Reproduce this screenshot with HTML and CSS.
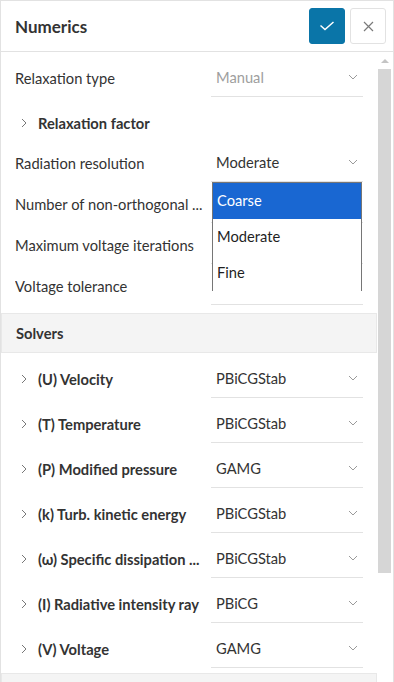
FILE: index.html
```html
<!DOCTYPE html>
<html lang="en">
<head>
    <meta charset="UTF-8">
    <meta name="viewport" content="width=device-width, initial-scale=1.0">
    <title>Numerics</title>
    <link rel="stylesheet" href="styles.css">
</head>
<body>

<div class="panel">
    <div class="panel-head">
        <h1>Numerics</h1>
        <div class="actions">
            <button class="btn-ok" title="Save">
                <svg width="16" height="10" viewBox="0 0 16 10"><path d="M1.5 4.5l4.5 4 8.5-7.5" fill="none" stroke="#fff" stroke-width="1.5"/></svg>
            </button>
            <button class="btn-close" title="Close">
                <svg width="11" height="11" viewBox="0 0 11 11"><path d="M1 1l9 9M10 1l-9 9" fill="none" stroke="#7a7a7a" stroke-width="1.2"/></svg>
            </button>
        </div>
    </div>

    <div class="panel-body">
        <div class="content">
            <div class="fields">
                <div class="row">
                    <span class="label">Relaxation type</span>
                    <div class="select disabled">
                        <span class="value">Manual</span>
                        <svg class="caret" width="10" height="6" viewBox="0 0 10 6"><path d="M1 1l4 4 4-4" fill="none" stroke="#9a9a9a"/></svg>
                    </div>
                </div>
                <div class="toggle toggle-block">
                    <svg class="chev" width="6" height="10" viewBox="0 0 6 10"><path d="M1 1l4 4-4 4" fill="none" stroke="#777"/></svg>
                    <span>Relaxation factor</span>
                </div>
                <div class="row">
                    <span class="label">Radiation resolution</span>
                    <div class="select open">
                        <span class="value">Moderate</span>
                        <svg class="caret" width="10" height="6" viewBox="0 0 10 6"><path d="M1 1l4 4 4-4" fill="none" stroke="#9a9a9a"/></svg>
                        <ul class="popup">
                            <li class="active">Coarse</li>
                            <li>Moderate</li>
                            <li>Fine</li>
                        </ul>
                    </div>
                </div>
                <div class="row">
                    <span class="label">Number of non-orthogonal ...</span>
                    <div class="select"></div>
                </div>
                <div class="row">
                    <span class="label">Maximum voltage iterations</span>
                    <div class="select"></div>
                </div>
                <div class="row">
                    <span class="label">Voltage tolerance</span>
                    <div class="select"></div>
                </div>
            </div>

            <div class="section-head">Solvers</div>

            <div class="fields solvers">
                <div class="row">
                    <span class="toggle"><svg class="chev" width="6" height="10" viewBox="0 0 6 10"><path d="M1 1l4 4-4 4" fill="none" stroke="#777"/></svg><span>(U) Velocity</span></span>
                    <div class="select"><span class="value">PBiCGStab</span><svg class="caret" width="10" height="6" viewBox="0 0 10 6"><path d="M1 1l4 4 4-4" fill="none" stroke="#9a9a9a"/></svg></div>
                </div>
                <div class="row">
                    <span class="toggle"><svg class="chev" width="6" height="10" viewBox="0 0 6 10"><path d="M1 1l4 4-4 4" fill="none" stroke="#777"/></svg><span>(T) Temperature</span></span>
                    <div class="select"><span class="value">PBiCGStab</span><svg class="caret" width="10" height="6" viewBox="0 0 10 6"><path d="M1 1l4 4 4-4" fill="none" stroke="#9a9a9a"/></svg></div>
                </div>
                <div class="row">
                    <span class="toggle"><svg class="chev" width="6" height="10" viewBox="0 0 6 10"><path d="M1 1l4 4-4 4" fill="none" stroke="#777"/></svg><span>(P) Modified pressure</span></span>
                    <div class="select"><span class="value">GAMG</span><svg class="caret" width="10" height="6" viewBox="0 0 10 6"><path d="M1 1l4 4 4-4" fill="none" stroke="#9a9a9a"/></svg></div>
                </div>
                <div class="row">
                    <span class="toggle"><svg class="chev" width="6" height="10" viewBox="0 0 6 10"><path d="M1 1l4 4-4 4" fill="none" stroke="#777"/></svg><span>(k) Turb. kinetic energy</span></span>
                    <div class="select"><span class="value">PBiCGStab</span><svg class="caret" width="10" height="6" viewBox="0 0 10 6"><path d="M1 1l4 4 4-4" fill="none" stroke="#9a9a9a"/></svg></div>
                </div>
                <div class="row">
                    <span class="toggle"><svg class="chev" width="6" height="10" viewBox="0 0 6 10"><path d="M1 1l4 4-4 4" fill="none" stroke="#777"/></svg><span>(ω) Specific dissipation ...</span></span>
                    <div class="select"><span class="value">PBiCGStab</span><svg class="caret" width="10" height="6" viewBox="0 0 10 6"><path d="M1 1l4 4 4-4" fill="none" stroke="#9a9a9a"/></svg></div>
                </div>
                <div class="row">
                    <span class="toggle"><svg class="chev" width="6" height="10" viewBox="0 0 6 10"><path d="M1 1l4 4-4 4" fill="none" stroke="#777"/></svg><span>(I) Radiative intensity ray</span></span>
                    <div class="select"><span class="value">PBiCG</span><svg class="caret" width="10" height="6" viewBox="0 0 10 6"><path d="M1 1l4 4 4-4" fill="none" stroke="#9a9a9a"/></svg></div>
                </div>
                <div class="row">
                    <span class="toggle"><svg class="chev" width="6" height="10" viewBox="0 0 6 10"><path d="M1 1l4 4-4 4" fill="none" stroke="#777"/></svg><span>(V) Voltage</span></span>
                    <div class="select"><span class="value">GAMG</span><svg class="caret" width="10" height="6" viewBox="0 0 10 6"><path d="M1 1l4 4 4-4" fill="none" stroke="#9a9a9a"/></svg></div>
                </div>
            </div>

            <div class="section-head"></div>
        </div>

        <div class="scrollbar">
            <span class="arrow"></span>
            <span class="thumb"></span>
        </div>
    </div>
</div>

</body>
</html>
```

FILE: styles.css
```css
* {
    box-sizing: border-box;
}
body {
    margin: 0;
    font-family: Lato, 'Open Sans', sans-serif;
    color: #333;
    background-color: #fff;
}
.panel {
    width: 394px;
    height: 682px;
    border: 1px solid #e2e2e2;
    border-bottom: none;
    overflow: hidden;
    display: flex;
    flex-direction: column;
}
.panel-head {
    height: 51px;
    flex: none;
    display: flex;
    align-items: center;
    justify-content: space-between;
    padding: 0 7px 0 14px;
    border-bottom: 1px solid #e2e2e2;
}
.panel-head h1 {
    margin: 0;
    font-size: 17px;
    font-weight: 700;
    color: #333;
}
.actions {
    display: flex;
    gap: 5px;
}
.actions button {
    width: 36px;
    height: 36px;
    padding: 0;
    border-radius: 3px;
    display: flex;
    align-items: center;
    justify-content: center;
    cursor: pointer;
}
.btn-ok {
    background-color: #0a75a8;
    border: 1px solid #0a75a8;
}
.btn-close {
    background-color: #fff;
    border: 1px solid #e2e2e2;
}
.panel-body {
    flex: 1;
    display: flex;
    min-height: 0;
}
.content {
    width: 376px;
    flex: none;
}
.fields {
    padding: 8px 14px 4px;
}
.row {
    display: flex;
    align-items: center;
    height: 37px;
    margin-bottom: 4px;
    font-size: 14.7px;
}
.label {
    width: 196px;
    flex: none;
    padding: 0 6px 2px 0;
    white-space: nowrap;
    overflow: hidden;
}
.select {
    position: relative;
    flex: 1;
    align-self: stretch;
    display: flex;
    align-items: center;
    justify-content: space-between;
    padding: 0 5px 2px;
    border-bottom: 1px solid #e2e2e2;
}
.select.disabled .value {
    color: #9e9e9e;
}
.caret {
    flex: none;
}
.toggle {
    display: flex;
    align-items: center;
    width: 196px;
    flex: none;
    padding-bottom: 2px;
    font-weight: 700;
    white-space: nowrap;
    overflow: hidden;
}
.chev {
    flex: none;
    margin: 0 11px 0 6px;
}
.toggle-block {
    width: auto;
    height: 44px;
    padding: 0;
    font-size: 14.7px;
}
.popup {
    position: absolute;
    top: 37px;
    left: 1px;
    right: 1px;
    margin: 0;
    padding: 0;
    list-style: none;
    background-color: #fff;
    border: 1px solid #767676;
    border-bottom: none;
    z-index: 5;
}
.popup li {
    height: 36px;
    line-height: 35px;
    padding-left: 4px;
    color: #1f1f1f;
}
.popup li.active {
    background-color: #1967d2;
    color: #fff;
}
.section-head {
    height: 40px;
    padding: 0 0 1px 14px;
    display: flex;
    align-items: center;
    font-size: 14.7px;
    font-weight: 700;
    background-color: #f4f4f4;
    border: 1px solid #e8e8e8;
}
.solvers {
    padding: 8px 14px 5px;
}
.solvers .row {
    margin-bottom: 8px;
}
.solvers .row:last-child {
    margin-bottom: 0;
}
.scrollbar {
    flex: 1;
    display: flex;
    flex-direction: column;
    padding: 7px 2px 0 1px;
}
.arrow {
    align-self: center;
    width: 0;
    height: 0;
    border-left: 4px solid transparent;
    border-right: 4px solid transparent;
    border-bottom: 4px solid #c4c4c4;
}
.thumb {
    margin-top: 6px;
    height: 504px;
    background-color: #d6d6d6;
}
```
